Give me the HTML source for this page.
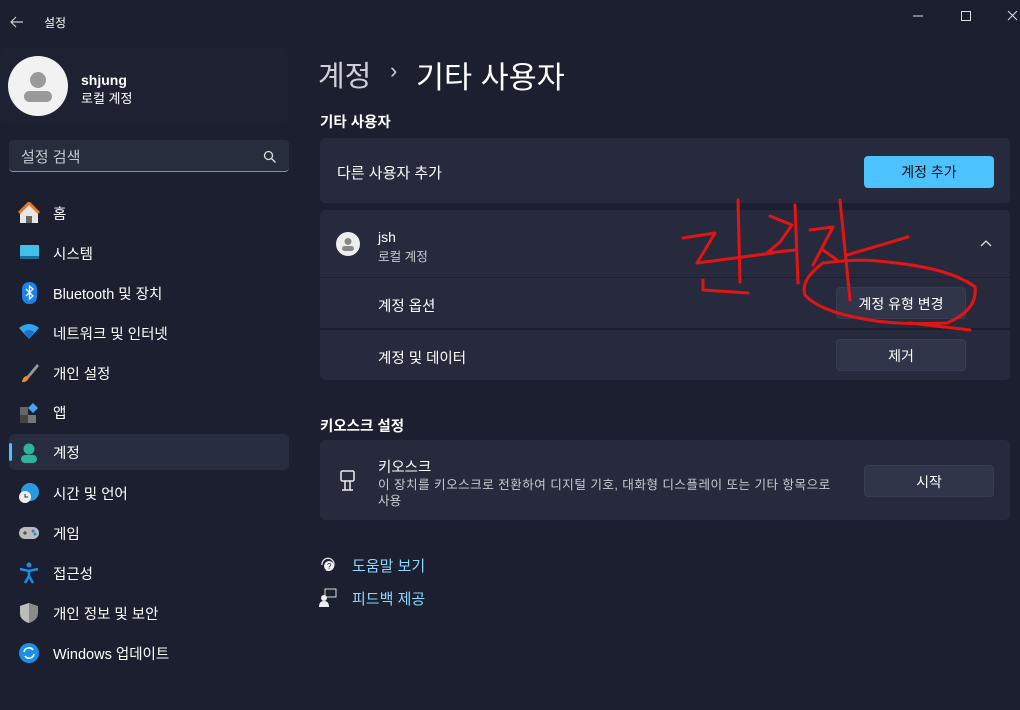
<!DOCTYPE html>
<html><head><meta charset="utf-8"><style>
*{margin:0;padding:0;box-sizing:border-box}
body{width:1020px;height:710px;background:#1b1f2f;font-family:"Liberation Sans","Noto Sans CJK KR",sans-serif;color:#fff;position:relative;overflow:hidden;font-size:14.5px}
.a{position:absolute;white-space:nowrap}
.card{position:absolute;left:320px;width:690px;background:#262a3c;border-radius:5px}
.btn{position:absolute;width:130px;height:32px;border-radius:4px;background:#30354a;color:#fff;font-size:14px;text-align:center;line-height:32px;border:1px solid #383d52}
.acc{background:#4cc2ff;color:#111;border:none}
.nav{position:absolute;left:53px;font-size:14.5px}
.ic{position:absolute;left:18px;width:22px;height:22px}
.sub{color:#c8cad2;font-size:12.6px}
</style></head><body>
<svg class="a" style="left:8px;top:14px" width="18" height="16"><path d="M15 8H3M8 3L3 8l5 5" stroke="#ccc" stroke-width="1.2" fill="none"/></svg>
<div class="a" style="left:44px;top:14px;font-size:12px">설정</div>
<svg class="a" style="left:910px;top:8px" width="110" height="16"><path d="M3 8h10" stroke="#ddd"/><rect x="51.5" y="3.5" width="9" height="9" stroke="#ddd" fill="none"/><path d="M98 3l9 9M107 3l-9 9" stroke="#ddd"/></svg>
<div class="a" style="left:0;top:48px;width:288px;height:75px;background:#1d2131;border-radius:6px"></div>
<svg class="a" style="left:8px;top:56px" width="60" height="60"><circle cx="30" cy="30" r="30" fill="#f2f2f2"/><circle cx="30" cy="24" r="8" fill="#9a9a9a"/><rect x="16" y="35" width="28" height="11" rx="5.5" fill="#9a9a9a"/></svg>
<div class="a" style="left:81px;top:72px;font-weight:bold;font-size:14px">shjung</div>
<div class="a" style="left:81px;top:88px;font-size:13px">로컬 계정</div>
<div class="a" style="left:9px;top:140px;width:280px;height:32px;background:#282d3e;border-radius:4px;border-bottom:1px solid #8b8f9e"></div>
<div class="a" style="left:21px;top:146px;font-size:15px;color:#c6c8d0">설정 검색</div>
<svg class="a" style="left:263px;top:150px" width="14" height="14"><circle cx="5.5" cy="5.5" r="4" stroke="#ddd" stroke-width="1.3" fill="none"/><path d="M8.5 8.5l4 4" stroke="#ddd" stroke-width="1.3"/></svg>
<div class="a" style="left:9px;top:434px;width:280px;height:36px;background:#272c3f;border-radius:5px"></div>
<div class="a" style="left:9px;top:443px;width:3px;height:18px;background:#4cc2ff;border-radius:2px"></div>
<svg class="ic" style="top:202px"><path d="M2 11L11 2l9 9v10H2z" fill="#e6e6e6"/><path d="M1 11L11 1l10 10" stroke="#e8772a" stroke-width="3" fill="none"/><rect x="8" y="14" width="6" height="7" fill="#666"/></svg>
<div class="nav" style="top:203px">홈</div>
<svg class="ic" style="top:244px"><rect x="2" y="1" width="19" height="13" rx="1" fill="#3fc2e6"/><rect x="2" y="12" width="19" height="3" fill="#1a6f9e"/></svg>
<div class="nav" style="top:243px">시스템</div>
<svg class="ic" style="top:282px"><rect x="4" y="0" width="15" height="22" rx="7" fill="#1a82e8"/><path d="M8 7l7 7-3.5 3V4L15 7l-7 7" stroke="#fff" stroke-width="1.3" fill="none"/></svg>
<div class="nav" style="top:283px">Bluetooth 및 장치</div>
<svg class="ic" style="top:322px"><path d="M1 6q10-8 20 0L11 17z" fill="#2aa7f0"/><path d="M6 10q5-4 10 0l-5 7z" fill="#1e6fc8"/></svg>
<div class="nav" style="top:323px">네트워크 및 인터넷</div>
<svg class="ic" style="top:362px"><path d="M19 2L9 14l2 2L21 4z" fill="#999"/><path d="M9 14q-4 0-5 6 4 1 7-4z" fill="#f08a24"/></svg>
<div class="nav" style="top:363px">개인 설정</div>
<svg class="ic" style="top:402px"><rect x="2" y="5" width="8" height="8" fill="#666"/><rect x="2" y="13" width="8" height="8" fill="#444"/><rect x="10" y="13" width="8" height="8" fill="#777"/><path d="M15 1l5 5-5 5-5-5z" fill="#3fa9ef"/></svg>
<div class="nav" style="top:402px">앱</div>
<svg class="ic" style="top:442px"><circle cx="11" cy="7" r="5.5" fill="#2bb59c"/><rect x="3" y="13" width="16" height="8" rx="4" fill="#2bb59c"/></svg>
<div class="nav" style="top:442px">계정</div>
<svg class="ic" style="top:482px"><circle cx="12" cy="10" r="9" fill="#2a9be3"/><circle cx="7" cy="15" r="6" fill="#eee"/><path d="M7 12v3h3" stroke="#333" fill="none"/></svg>
<div class="nav" style="top:483px">시간 및 언어</div>
<svg class="ic" style="top:522px"><rect x="1" y="5" width="20" height="12" rx="6" fill="#bbb"/><circle cx="15" cy="9" r="1.5" fill="#2a7fd8"/><circle cx="17" cy="12" r="1.5" fill="#2a7fd8"/><path d="M5 11h4M7 9v4" stroke="#333"/></svg>
<div class="nav" style="top:523px">게임</div>
<svg class="ic" style="top:562px"><circle cx="11" cy="3" r="2.5" fill="#1a8fe8"/><path d="M2 7l9 2 9-2M11 9v5l-4 7M11 14l4 7" stroke="#1a8fe8" stroke-width="2.5" fill="none"/></svg>
<div class="nav" style="top:563px">접근성</div>
<svg class="ic" style="top:602px"><path d="M11 1l9 3v7q0 7-9 10Q2 18 2 11V4z" fill="#8a8a8a"/><path d="M11 1v20Q2 18 2 11V4z" fill="#bcbcbc"/></svg>
<div class="nav" style="top:603px">개인 정보 및 보안</div>
<svg class="ic" style="top:642px"><circle cx="11" cy="11" r="10" fill="#1a8fe8"/><path d="M6 10a5 5 0 0 1 9-2M16 12a5 5 0 0 1-9 2" stroke="#fff" stroke-width="1.6" fill="none"/></svg>
<div class="nav" style="top:643px">Windows 업데이트</div>
<div class="a" style="left:318px;top:53px;font-size:29px;color:#cfd0d6">계정</div>
<div class="a" style="left:390px;top:58px;font-size:22px;color:#cfd0d6">›</div>
<div class="a" style="left:416px;top:53px;font-size:30.5px">기타 사용자</div>
<div class="a" style="left:320px;top:111px;font-weight:bold;font-size:14.5px">기타 사용자</div>
<div class="card" style="top:138px;height:65px"></div>
<div class="a" style="left:337px;top:162px;font-size:15px">다른 사용자 추가</div>
<div class="btn acc" style="left:864px;top:156px">계정 추가</div>
<div class="card" style="top:210px;height:170px"></div>
<div class="a" style="left:320px;top:277px;width:690px;height:1px;background:#1b1f2f"></div>
<div class="a" style="left:320px;top:328px;width:690px;height:2px;background:#1b1f2f"></div>
<svg class="a" style="left:336px;top:232px" width="24" height="24"><circle cx="12" cy="12" r="12" fill="#eee"/><circle cx="12" cy="9.5" r="3.5" fill="#888"/><rect x="6" y="14" width="12" height="5" rx="2.5" fill="#888"/></svg>
<div class="a" style="left:378px;top:229px;font-size:14px">jsh</div>
<div class="a sub" style="left:378px;top:246px">로컬 계정</div>
<svg class="a" style="left:979px;top:238px" width="14" height="10"><path d="M2 8l5-5 5 5" stroke="#ddd" stroke-width="1.3" fill="none"/></svg>
<div class="a" style="left:378px;top:295px">계정 옵션</div>
<div class="btn" style="left:836px;top:287px">계정 유형 변경</div>
<div class="a" style="left:378px;top:347px">계정 및 데이터</div>
<div class="btn" style="left:836px;top:339px">제거</div>
<div class="a" style="left:320px;top:415px;font-weight:bold;font-size:14.5px">키오스크 설정</div>
<div class="card" style="top:440px;height:80px"></div>
<svg class="a" style="left:338px;top:469px" width="20" height="24"><rect x="3" y="2" width="13" height="10" rx="1.5" stroke="#eee" stroke-width="1.5" fill="none"/><path d="M7 12v9M12 12v9M4 21h11" stroke="#eee" stroke-width="1.5"/></svg>
<div class="a" style="left:378px;top:456px;font-size:14.5px">키오스크</div>
<div class="a sub" style="left:378px;top:474px;letter-spacing:0.45px">이 장치를 키오스크로 전환하여 디지털 기호, 대화형 디스플레이 또는 기타 항목으로</div>
<div class="a sub" style="left:378px;top:490px">사용</div>
<div class="btn" style="left:864px;top:465px">시작</div>
<svg class="a" style="left:318px;top:555px" width="20" height="20"><path d="M4 10a6 6 0 1 1 4 5" stroke="#ddd" stroke-width="1.3" fill="none"/><circle cx="11" cy="11" r="5" fill="#eee"/><text x="9" y="14" font-size="8" fill="#222" font-family="Liberation Sans">?</text></svg>
<div class="a" style="left:352px;top:555px;color:#8ed8ff;font-size:15px">도움말 보기</div>
<svg class="a" style="left:318px;top:588px" width="20" height="20"><rect x="7" y="1" width="11" height="8" stroke="#ddd" fill="none"/><circle cx="6" cy="10" r="3" fill="#eee"/><path d="M1 19q0-6 5-6t5 6z" fill="#eee"/></svg>
<div class="a" style="left:352px;top:588px;color:#8ed8ff;font-size:15px">피드백 제공</div>
<svg class="a" style="left:0;top:0" width="1020" height="710"><g stroke="#e21515" stroke-width="3" fill="none" stroke-linecap="round" stroke-linejoin="round">
<path d="M683 238L715 233Q705 250 697 263L773 253"/>
<path d="M738 200L740 282"/>
<path d="M703 280L703 290L748 293"/>
<path d="M770 216L792 225L780 242L767 253L795 250"/>
<path d="M795 205L798 283"/>
<path d="M810 230L833 227L813 265M823 250L837 260"/>
<path d="M840 200L850 300M847 255L908 237"/>
<path d="M823 263Q860 258 887 262Q950 268 975 287Q978 310 947 323Q900 325 870 320Q820 312 805 295Q800 280 823 263M910 323L970 330"/>
</g></svg>
</body></html>
